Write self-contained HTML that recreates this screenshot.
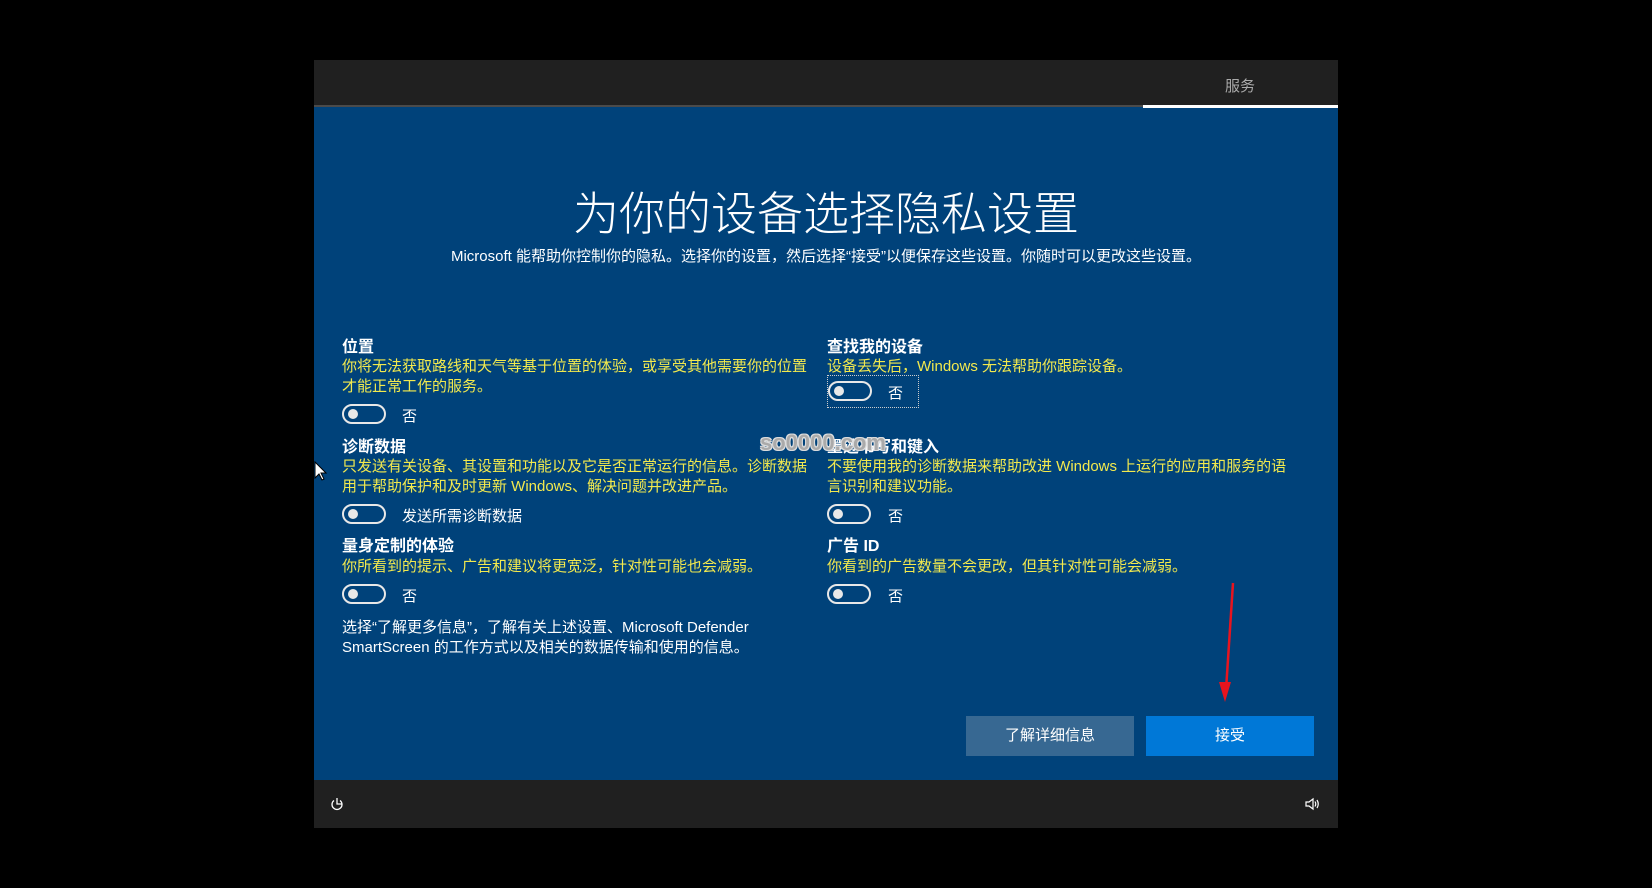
<!DOCTYPE html>
<html><head><meta charset="utf-8"><style>
*{margin:0;padding:0;box-sizing:border-box}
body{width:1652px;height:888px;background:#000;position:relative;overflow:hidden;font-family:"Liberation Sans","Microsoft YaHei","Noto Sans CJK SC",sans-serif}
.a{position:absolute;white-space:nowrap}
#win{position:absolute;left:314px;top:60px;width:1024px;height:768px;background:#00427a}
#hdr{position:absolute;left:0;top:0;width:1024px;height:46px;background:#202020}
#line{position:absolute;left:0;top:45px;width:1024px;height:2px;background:#4a4a4a}
#wline{position:absolute;left:829px;top:45px;width:195px;height:3px;background:#fff}
#ftr{position:absolute;left:0;top:720px;width:1024px;height:48px;background:#202020}
.h{color:#fff;font-weight:bold;font-size:16px}
.y{color:#f2e94e;font-size:15px;line-height:20px}
.w{color:#fff;font-size:15px;line-height:20px}
.tg{position:absolute;width:44px;height:20px;border:2px solid #e8e8e8;border-radius:10px}
.tg::after{content:"";position:absolute;left:4px;top:3px;width:10px;height:10px;border-radius:50%;background:#e8e8e8}
.tl{color:#fff;font-size:15px}
.btn{position:absolute;top:656px;width:168px;height:40px;color:#fff;font-size:15px;text-align:center;line-height:40px}
</style></head><body>
<div id="win">
<div id="hdr"></div><div id="line"></div><div id="wline"></div>
<div class="a" style="left:911px;top:15px;color:#aaa;font-size:15px">服务</div>
<div class="a" style="left:0;width:1024px;text-align:center;top:118px;color:#fff;font-size:46px;font-weight:300">为你的设备选择隐私设置</div>
<div class="a" style="left:0;width:1024px;text-align:center;top:185px;color:#fff;font-size:15px">Microsoft 能帮助你控制你的隐私。选择你的设置，然后选择“接受”以便保存这些设置。你随时可以更改这些设置。</div>

<div class="a h" style="left:28px;top:273px">位置</div>
<div class="a y" style="left:28px;top:297px">你将无法获取路线和天气等基于位置的体验，或享受其他需要你的位置<br>才能正常工作的服务。</div>
<div class="tg" style="left:28px;top:344px"></div><div class="a tl" style="left:88px;top:345px">否</div>

<div class="a h" style="left:28px;top:373px">诊断数据</div>
<div class="a y" style="left:28px;top:397px">只发送有关设备、其设置和功能以及它是否正常运行的信息。诊断数据<br>用于帮助保护和及时更新 Windows、解决问题并改进产品。</div>
<div class="tg" style="left:28px;top:444px"></div><div class="a tl" style="left:88px;top:445px">发送所需诊断数据</div>

<div class="a h" style="left:28px;top:472px">量身定制的体验</div>
<div class="a y" style="left:28px;top:497px">你所看到的提示、广告和建议将更宽泛，针对性可能也会减弱。</div>
<div class="tg" style="left:28px;top:524px"></div><div class="a tl" style="left:88px;top:525px">否</div>

<div class="a w" style="left:28px;top:558px">选择“了解更多信息”，了解有关上述设置、Microsoft Defender<br>SmartScreen 的工作方式以及相关的数据传输和使用的信息。</div>

<div class="a h" style="left:513px;top:273px">查找我的设备</div>
<div class="a y" style="left:513px;top:297px">设备丢失后，Windows 无法帮助你跟踪设备。</div>
<div class="a" style="left:513px;top:315px;width:92px;height:33px;border:1px dotted #ccc"></div>
<div class="tg" style="left:514px;top:321px"></div><div class="a tl" style="left:574px;top:322px">否</div>

<div class="a h" style="left:513px;top:373px">墨迹书写和键入</div>
<div class="a" style="left:446px;top:370px;font-size:22px;font-weight:bold;color:#aaa;text-shadow:1px 1px 0 #ddd,-1px -1px 0 #ddd,1px -1px 0 #ddd,-1px 1px 0 #ddd">so0000.com</div>
<div class="a y" style="left:513px;top:397px">不要使用我的诊断数据来帮助改进 Windows 上运行的应用和服务的语<br>言识别和建议功能。</div>
<div class="tg" style="left:513px;top:444px"></div><div class="a tl" style="left:574px;top:445px">否</div>

<div class="a h" style="left:513px;top:472px">广告 ID</div>
<div class="a y" style="left:513px;top:497px">你看到的广告数量不会更改，但其针对性可能会减弱。</div>
<div class="tg" style="left:513px;top:524px"></div><div class="a tl" style="left:574px;top:525px">否</div>

<div class="btn" style="left:652px;background:#376892">了解详细信息</div>
<div class="btn" style="left:832px;background:#0078d7">接受</div>

<div id="ftr">
<svg class="a" style="left:15px;top:16px" width="16" height="16" viewBox="0 0 16 16" fill="none" stroke="#fff" stroke-width="1.3"><path d="M5 4.5A5 5 0 1 0 11 4.5"/><path d="M8 2v6h5"/></svg>
<svg class="a" style="left:990px;top:16px" width="16" height="16" viewBox="0 0 16 16" fill="none" stroke="#fff" stroke-width="1.2"><path d="M2 6h3l4-3v10l-4-3H2z"/><path d="M11 5.5q1.5 2.5 0 5M13 4q2.5 4 0 8"/></svg>
</div>
</div>
<svg class="a" style="left:0;top:0" width="1652" height="888">
<path d="M1233 583 L1226 690" stroke="#e8141e" stroke-width="2.5"/>
<path d="M1219 682 L1225 702 L1231 682 Z" fill="#e8141e"/>
<path d="M315 462 L315 478 L319 474 L322 480 L324 479 L321 473 L326 473 Z" fill="#fff" stroke="#000" stroke-width="1"/>
</svg>
</body></html>
